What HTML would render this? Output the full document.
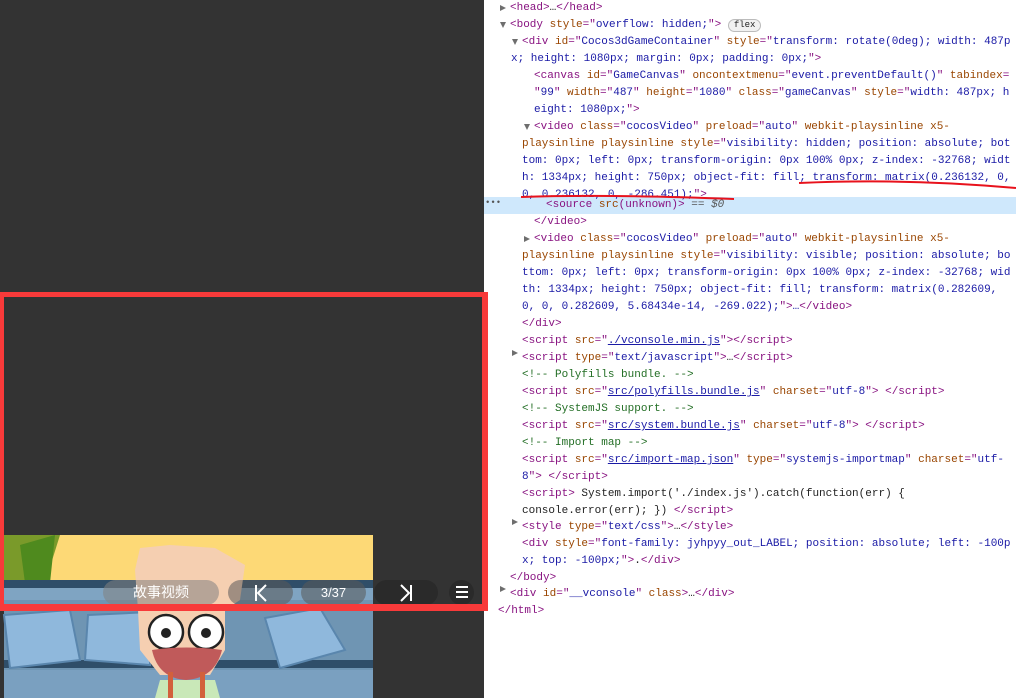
<!DOCTYPE html>
<html><head><meta charset="utf-8"><style>
*{margin:0;padding:0;box-sizing:border-box}
body{width:1016px;height:698px;overflow:hidden;background:#fff;position:relative;font-family:"Liberation Mono",monospace}
#left{position:absolute;left:0;top:0;width:484px;height:698px;background:#333}
#dev{position:absolute;left:484px;top:0;width:532px;height:698px;background:#fff;font-size:11px;color:#222}
.l{position:absolute;white-space:pre;height:17px;line-height:17px;font-size:11px}
.t{color:#881280}.a{color:#994500}.v{color:#1a1aa6}.c{color:#236e25}.u{color:#1a1aa6;text-decoration:underline}
.tri{position:absolute;width:0;height:0;border-left:6px solid #6e6e6e;border-top:3.5px solid transparent;border-bottom:3.5px solid transparent}
.trd{position:absolute;width:0;height:0;border-top:6px solid #6e6e6e;border-left:3.5px solid transparent;border-right:3.5px solid transparent}
.pill{position:absolute;top:580px;height:25px;border-radius:13px;color:#fff;font-family:"Liberation Sans","Noto Sans CJK SC",sans-serif;font-size:14px;text-align:center;line-height:25px}
</style></head><body>
<div id="left">
<svg width="484" height="698" style="position:absolute;left:0;top:0">
<rect x="4" y="535" width="369" height="163" fill="#6f95b3"/>
<rect x="4" y="535" width="369" height="48" fill="#fdd976"/>
<path d="M4 535 L60 535 L45 583 L4 583Z" fill="#7a9a2a"/>
<path d="M20 545 L55 535 L50 583 L25 583Z" fill="#4f8a1e"/>
<rect x="4" y="580" width="369" height="8" fill="#2f4e69"/>
<rect x="4" y="588" width="369" height="12" fill="#7fa4c2"/>
<rect x="4" y="660" width="369" height="8" fill="#2f4e69"/>
<rect x="4" y="670" width="369" height="28" fill="#7aa0c0"/>
<path d="M4 615 L70 610 L80 660 L10 668Z" fill="#8fb8dc" stroke="#5a86ad" stroke-width="2"/>
<path d="M88 615 L150 612 L150 665 L85 660Z" fill="#8fb8dc" stroke="#5a86ad" stroke-width="2"/>
<path d="M265 618 L320 608 L345 650 L280 668Z" fill="#8fb8dc" stroke="#5a86ad" stroke-width="2"/>
<path d="M135 570 L140 548 L170 545 L215 548 L245 565 L240 600 L225 610 L225 650 L210 675 L160 675 L140 650 L138 610Z" fill="#f5cfb1"/>
<circle cx="166" cy="632" r="17" fill="#fff" stroke="#222" stroke-width="2.5"/>
<circle cx="206" cy="632" r="17" fill="#fff" stroke="#222" stroke-width="2.5"/>
<circle cx="166" cy="633" r="5" fill="#222"/><circle cx="206" cy="633" r="5" fill="#222"/>
<path d="M152 650 Q186 645 222 650 Q215 678 186 680 Q158 678 152 650Z" fill="#c05a5a"/>
<path d="M160 680 L215 680 L220 698 L155 698Z" fill="#c9e8b8"/>
<rect x="168" y="672" width="5" height="26" fill="#d2603c"/><rect x="200" y="672" width="5" height="26" fill="#d2603c"/>
</svg>
<div class="pill" style="left:103px;width:116px;background:rgba(130,130,130,.55)">故事视频</div>
<div class="pill" style="left:228px;width:65px;background:rgba(90,90,90,.55)"><svg width="14" height="18" style="margin-top:4px"><path d="M2 1V17M12 1L4 9L12 17" stroke="#fff" stroke-width="2" fill="none"/></svg></div>
<div class="pill" style="left:301px;width:65px;background:rgba(90,90,90,.55);font-size:13px">3/37</div>
<div class="pill" style="left:374px;width:64px;background:#2a2a2a"><svg width="14" height="18" style="margin-top:4px"><path d="M12 1V17M2 1L10 9L2 17" stroke="#fff" stroke-width="2" fill="none"/></svg></div>
<div class="pill" style="left:449px;width:25px;background:#2a2a2a"><svg width="14" height="14" style="margin-top:5px"><path d="M1 2H13M1 7H13M1 12H13" stroke="#fff" stroke-width="2"/></svg></div>
</div>
<div id="dev">
<div style="position:absolute;left:0;top:197px;width:532px;height:17px;background:#cfe8fc"></div>
<div style="position:absolute;left:1px;top:198px;font-size:9px;color:#555">•••</div>
<div class="tri" style="left:16px;top:5px"></div>
<div class="l" style="left:26px;top:0px"><span class="t">&lt;head&gt;</span>…<span class="t">&lt;/head&gt;</span></div>
<div class="trd" style="left:16px;top:22px"></div>
<div class="l" style="left:26px;top:17px"><span class="t">&lt;body </span><span class="a">style</span><span class="t">="</span><span class="v">overflow: hidden;</span><span class="t">"&gt;</span> <span style="display:inline-block;border:1px solid #bbb;border-radius:8px;font-size:9px;line-height:11px;padding:0 5px;background:#f1f1f1">flex</span></div>
<div class="trd" style="left:28px;top:39px"></div>
<div class="l" style="left:38px;top:34px"><span class="t">&lt;div </span><span class="a">id</span><span class="t">="</span><span class="v">Cocos3dGameContainer</span><span class="t">" </span><span class="a">style</span><span class="t">="</span><span class="v">transform: rotate(0deg); width: 487p</span></div>
<div class="l v" style="left:27px;top:51px">x; height: 1080px; margin: 0px; padding: 0px;<span class="t">"&gt;</span></div>
<div class="l" style="left:50px;top:68px"><span class="t">&lt;canvas </span><span class="a">id</span><span class="t">="</span><span class="v">GameCanvas</span><span class="t">" </span><span class="a">oncontextmenu</span><span class="t">="</span><span class="v">event.preventDefault()</span><span class="t">" </span><span class="a">tabindex</span><span class="t">=</span></div>
<div class="l" style="left:50px;top:85px"><span class="t">"</span><span class="v">99</span><span class="t">" </span><span class="a">width</span><span class="t">="</span><span class="v">487</span><span class="t">" </span><span class="a">height</span><span class="t">="</span><span class="v">1080</span><span class="t">" </span><span class="a">class</span><span class="t">="</span><span class="v">gameCanvas</span><span class="t">" </span><span class="a">style</span><span class="t">="</span><span class="v">width: 487px; h</span></div>
<div class="l v" style="left:50px;top:102px">eight: 1080px;<span class="t">"&gt;</span></div>
<div class="trd" style="left:40px;top:124px"></div>
<div class="l" style="left:50px;top:119px"><span class="t">&lt;video </span><span class="a">class</span><span class="t">="</span><span class="v">cocosVideo</span><span class="t">" </span><span class="a">preload</span><span class="t">="</span><span class="v">auto</span><span class="t">" </span><span class="a">webkit-playsinline x5-</span></div>
<div class="l" style="left:38px;top:136px"><span class="a">playsinline playsinline style</span><span class="t">="</span><span class="v">visibility: hidden; position: absolute; bot</span></div>
<div class="l v" style="left:38px;top:153px">tom: 0px; left: 0px; transform-origin: 0px 100% 0px; z-index: -32768; widt</div>
<div class="l v" style="left:38px;top:170px">h: 1334px; height: 750px; object-fit: fill; transform: matrix(0.236132, 0,</div>
<div class="l v" style="left:38px;top:187px">0, 0.236132, 0, -286.451);<span class="t">"&gt;</span></div>
<svg style="position:absolute;left:0;top:0" width="532" height="210"><path d="M315 183 Q420 178 532 188" stroke="#e8121c" stroke-width="2" fill="none"/><path d="M37 197 Q120 194 250 199" stroke="#e8121c" stroke-width="2" fill="none"/></svg>
<div class="l" style="left:62px;top:197px"><span class="t">&lt;source </span><span class="a">src</span><span class="t">(unknown)&gt;</span> <span style="color:#555">== <i>$0</i></span></div>
<div class="l t" style="left:50px;top:214px">&lt;/video&gt;</div>
<div class="tri" style="left:40px;top:236px"></div>
<div class="l" style="left:50px;top:231px"><span class="t">&lt;video </span><span class="a">class</span><span class="t">="</span><span class="v">cocosVideo</span><span class="t">" </span><span class="a">preload</span><span class="t">="</span><span class="v">auto</span><span class="t">" </span><span class="a">webkit-playsinline x5-</span></div>
<div class="l" style="left:38px;top:248px"><span class="a">playsinline playsinline style</span><span class="t">="</span><span class="v">visibility: visible; position: absolute; bo</span></div>
<div class="l v" style="left:38px;top:265px">ttom: 0px; left: 0px; transform-origin: 0px 100% 0px; z-index: -32768; wid</div>
<div class="l v" style="left:38px;top:282px">th: 1334px; height: 750px; object-fit: fill; transform: matrix(0.282609,</div>
<div class="l v" style="left:38px;top:299px">0, 0, 0.282609, 5.68434e-14, -269.022);<span class="t">"&gt;</span>…<span class="t">&lt;/video&gt;</span></div>
<div class="l t" style="left:38px;top:316px">&lt;/div&gt;</div>
<div class="l" style="left:38px;top:333px"><span class="t">&lt;script </span><span class="a">src</span><span class="t">="</span><span class="u">./vconsole.min.js</span><span class="t">"&gt;&lt;/script&gt;</span></div>
<div class="tri" style="left:28px;top:350px"></div>
<div class="l" style="left:38px;top:350px"><span class="t">&lt;script </span><span class="a">type</span><span class="t">="</span><span class="v">text/javascript</span><span class="t">"&gt;</span>…<span class="t">&lt;/script&gt;</span></div>
<div class="l c" style="left:38px;top:367px">&lt;!-- Polyfills bundle. --&gt;</div>
<div class="l" style="left:38px;top:384px"><span class="t">&lt;script </span><span class="a">src</span><span class="t">="</span><span class="u">src/polyfills.bundle.js</span><span class="t">" </span><span class="a">charset</span><span class="t">="</span><span class="v">utf-8</span><span class="t">"&gt; &lt;/script&gt;</span></div>
<div class="l c" style="left:38px;top:401px">&lt;!-- SystemJS support. --&gt;</div>
<div class="l" style="left:38px;top:418px"><span class="t">&lt;script </span><span class="a">src</span><span class="t">="</span><span class="u">src/system.bundle.js</span><span class="t">" </span><span class="a">charset</span><span class="t">="</span><span class="v">utf-8</span><span class="t">"&gt; &lt;/script&gt;</span></div>
<div class="l c" style="left:38px;top:435px">&lt;!-- Import map --&gt;</div>
<div class="l" style="left:38px;top:452px"><span class="t">&lt;script </span><span class="a">src</span><span class="t">="</span><span class="u">src/import-map.json</span><span class="t">" </span><span class="a">type</span><span class="t">="</span><span class="v">systemjs-importmap</span><span class="t">" </span><span class="a">charset</span><span class="t">="</span><span class="v">utf-</span></div>
<div class="l" style="left:38px;top:469px"><span class="v">8</span><span class="t">"&gt; &lt;/script&gt;</span></div>
<div class="l" style="left:38px;top:486px"><span class="t">&lt;script&gt;</span> System.import('./index.js').catch(function(err) {</div>
<div class="l" style="left:38px;top:503px">console.error(err); }) <span class="t">&lt;/script&gt;</span></div>
<div class="tri" style="left:28px;top:519px"></div>
<div class="l" style="left:38px;top:519px"><span class="t">&lt;style </span><span class="a">type</span><span class="t">="</span><span class="v">text/css</span><span class="t">"&gt;</span>…<span class="t">&lt;/style&gt;</span></div>
<div class="l" style="left:38px;top:536px"><span class="t">&lt;div </span><span class="a">style</span><span class="t">="</span><span class="v">font-family: jyhpyy_out_LABEL; position: absolute; left: -100p</span></div>
<div class="l" style="left:38px;top:553px"><span class="v">x; top: -100px;</span><span class="t">"&gt;</span>.<span class="t">&lt;/div&gt;</span></div>
<div class="l t" style="left:26px;top:570px">&lt;/body&gt;</div>
<div class="tri" style="left:16px;top:586px"></div>
<div class="l" style="left:26px;top:586px"><span class="t">&lt;div </span><span class="a">id</span><span class="t">="</span><span class="v">__vconsole</span><span class="t">" </span><span class="a">class</span><span class="t">&gt;</span>…<span class="t">&lt;/div&gt;</span></div>
<div class="l t" style="left:14px;top:603px">&lt;/html&gt;</div>
</div>
<div style="position:absolute;left:0;top:292px;width:488px;height:319px;border:5px solid #f83a3a;border-left-width:4px;border-right-width:6px;border-bottom-width:7px"></div>
</body></html>
